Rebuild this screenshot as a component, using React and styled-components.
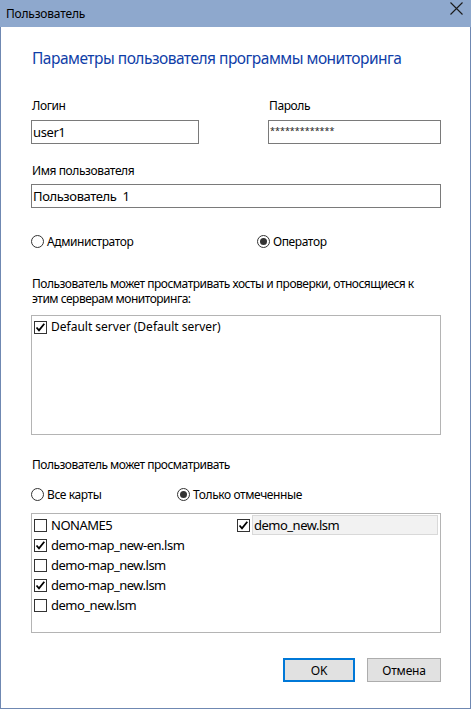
import styled, { createGlobalStyle } from 'styled-components';

const GlobalStyle = createGlobalStyle`
  html, body {
    margin: 0;
    padding: 0;
    background: #fff;
  }
  body {
    font-family: "Noto Sans", "Liberation Sans", sans-serif;
    font-size: 12px;
    letter-spacing: -0.4px;
    color: #000;
  }
`;

const Window = styled.div`
  width: 471px;
  height: 709px;
  box-sizing: border-box;
  border: 1px solid #6f88b2;
  border-top: none;
  background: #fff;
  display: flex;
  flex-direction: column;
`;

const TitleBar = styled.div`
  height: 27px;
  background: #8ea8cd;
  display: flex;
  align-items: center;
  justify-content: space-between;
  padding: 0 8px 0 6px;
  margin: 0 -1px;
  font-size: 12px;
  letter-spacing: -0.2px;
`;

const CloseIcon = styled.svg`
  width: 13px;
  height: 13px;
  margin-top: -10px;
`;

const Content = styled.div`
  padding: 20px 29px 0 30px;
  display: flex;
  flex-direction: column;
`;

const Heading = styled.h1`
  margin: 0;
  font-size: 15.5px;
  font-weight: 400;
  line-height: 22px;
  letter-spacing: -0.5px;
  color: #0f3ea8;
  padding-left: 1px;
`;

const FieldGrid = styled.div`
  display: grid;
  grid-template-columns: 168px 1fr;
  column-gap: 69px;
  margin-top: 29px;
`;

const Field = styled.div`
  display: flex;
  flex-direction: column;
  margin-top: ${({ $top }) => $top || 0}px;
`;

const Label = styled.label`
  line-height: 16px;
  padding-left: 1px;
  margin-bottom: ${({ $gap }) => $gap}px;
`;

const TextBox = styled.div`
  height: 24px;
  box-sizing: border-box;
  border: 1px solid #7a7a7a;
  display: flex;
  align-items: center;
  padding-left: 1px;
  font-size: 13px;
  white-space: pre;
`;

const Stars = styled.span`
  font-size: 9px;
  letter-spacing: 0;
  color: #222;
  margin-top: -3px;
`;

const RadioRow = styled.div`
  display: grid;
  grid-template-columns: ${({ $split }) => $split}px 1fr;
  margin-top: ${({ $top }) => $top}px;
  height: 16px;
  align-items: center;
`;

const Option = styled.div`
  display: flex;
  align-items: center;
  gap: 3px;
  font-size: 12px;
`;

const RadioCircle = styled.span`
  width: 13px;
  height: 13px;
  box-sizing: border-box;
  border-radius: 50%;
  border: 1px solid #333;
  background: #fff;
  display: flex;
  align-items: center;
  justify-content: center;
  &::after {
    content: '';
    width: 7px;
    height: 7px;
    border-radius: 50%;
    background: ${({ $on }) => ($on ? '#333' : 'transparent')};
  }
`;

const Text = styled.p`
  margin: ${({ $top }) => $top}px 0 0;
  line-height: 15px;
  padding-left: 1px;
  font-size: 12px;
  letter-spacing: -0.5px;
  white-space: nowrap;
`;

const ListBox = styled.div`
  margin-top: ${({ $top }) => $top}px;
  height: 120px;
  box-sizing: border-box;
  border: 1px solid #b4b4b4;
  padding: 1px 0 0 1px;
`;

const ItemGrid = styled.div`
  display: grid;
  grid-auto-flow: column;
  grid-template-rows: repeat(5, 20px);
  grid-auto-columns: 203px;
`;

const Item = styled.div`
  display: flex;
  align-items: center;
  height: 20px;
  padding-left: 1px;
  font-size: ${({ $size }) => $size}px;
  letter-spacing: ${({ $ls }) => $ls}px;
`;

const Box = styled.span`
  width: 13px;
  height: 13px;
  flex: none;
  box-sizing: border-box;
  border: 1px solid #333;
  background: #fff;
  display: flex;
  align-items: center;
  justify-content: center;
`;

const ItemText = styled.span`
  flex: 1;
  height: 20px;
  line-height: 18px;
  box-sizing: border-box;
  margin-left: 2px;
  margin-right: 1px;
  padding-left: 1px;
  white-space: nowrap;
  border: 1px solid ${({ $focus }) => ($focus ? '#d9d9d9' : 'transparent')};
  background: ${({ $focus }) => ($focus ? '#f2f2f2' : 'transparent')};
`;

const Buttons = styled.div`
  display: flex;
  justify-content: flex-end;
  gap: 12px;
  margin-top: 25px;
`;

const Button = styled.button`
  width: ${({ $w }) => $w}px;
  height: 24px;
  box-sizing: border-box;
  background: #e1e1e1;
  border: ${({ $primary }) => ($primary ? '2px solid #0078d7' : '1px solid #adadad')};
  font-family: inherit;
  font-size: 12px;
  letter-spacing: -0.2px;
  color: #000;
  padding: 0;
`;

function Check() {
  return (
    <svg width="11" height="11" viewBox="0 0 11 11">
      <path d="M1.5 5.5 L4 8.3 L9.3 1.8" fill="none" stroke="#000" strokeWidth="1.8" />
    </svg>
  );
}

function CheckItem({ label, checked, focus, size, ls }) {
  return (
    <Item $size={size} $ls={ls}>
      <Box>{checked && <Check />}</Box>
      <ItemText $focus={focus}>{label}</ItemText>
    </Item>
  );
}

function Radio({ label, on }) {
  return (
    <Option>
      <RadioCircle $on={on} />
      {label}
    </Option>
  );
}

export default function App() {
  const maps = [
    { label: 'NONAME5', checked: false },
    { label: 'demo-map_new-en.lsm', checked: true },
    { label: 'demo-map_new.lsm', checked: false },
    { label: 'demo-map_new.lsm', checked: true },
    { label: 'demo_new.lsm', checked: false },
    { label: 'demo_new.lsm', checked: true, focus: true },
  ];

  return (
    <>
      <GlobalStyle />
      <Window>
        <TitleBar>
          <span>Пользователь</span>
          <CloseIcon viewBox="0 0 13 13">
            <path d="M0.5 0.5 L12.5 12.5 M12.5 0.5 L0.5 12.5" stroke="#1a1a1a" strokeWidth="1.1" />
          </CloseIcon>
        </TitleBar>
        <Content>
          <Heading>Параметры пользователя программы мониторинга</Heading>

          <FieldGrid>
            <Field>
              <Label $gap={6}>Логин</Label>
              <TextBox>user1</TextBox>
            </Field>
            <Field>
              <Label $gap={6}>Пароль</Label>
              <TextBox><Stars>*************</Stars></TextBox>
            </Field>
          </FieldGrid>

          <Field $top={19}>
            <Label $gap={5}>Имя пользователя</Label>
            <TextBox>Пользователь  1</TextBox>
          </Field>

          <RadioRow $split={226} $top={25}>
            <Radio label="Администратор" />
            <Radio label="Оператор" on />
          </RadioRow>

          <Text $top={27}>
            Пользователь может просматривать хосты и проверки, относящиеся к
            <br />
            этим серверам мониторинга:
          </Text>

          <ListBox $top={9}>
            <ItemGrid>
              <CheckItem label="Default server (Default server)" checked size={12} ls={0} />
            </ItemGrid>
          </ListBox>

          <Text $top={22}>Пользователь может просматривать</Text>

          <RadioRow $split={146} $top={14}>
            <Radio label="Все карты" />
            <Radio label="Только отмеченные" on />
          </RadioRow>

          <ListBox $top={11}>
            <ItemGrid>
              {maps.map((m, i) => (
                <CheckItem key={i} label={m.label} checked={m.checked} focus={m.focus} size={13} ls={-0.5} />
              ))}
            </ItemGrid>
          </ListBox>

          <Buttons>
            <Button $primary $w={72}>OK</Button>
            <Button $w={74}>Отмена</Button>
          </Buttons>
        </Content>
      </Window>
    </>
  );
}
